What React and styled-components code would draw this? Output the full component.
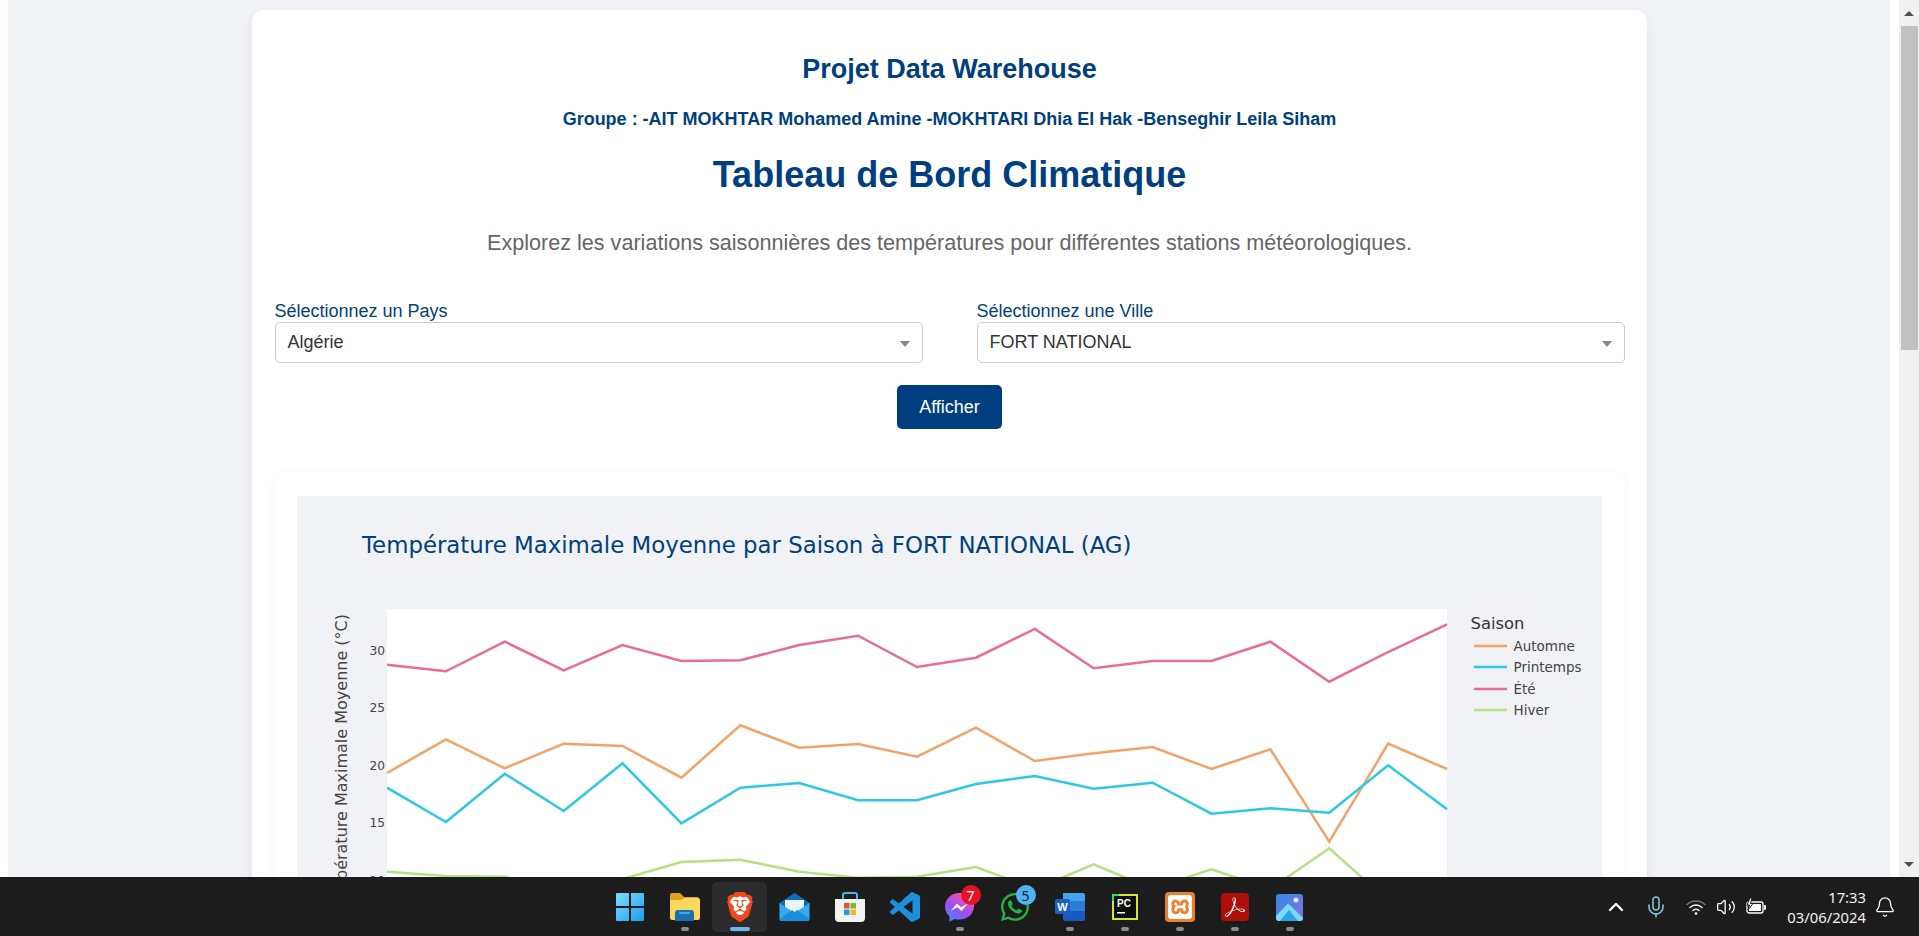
import styled, { createGlobalStyle } from 'styled-components';
import { ChevronUp, Mic, Volume2, Bell } from 'lucide-react';
import { SiBrave, SiXampp, SiAdobeacrobatreader } from 'react-icons/si';
import { FaWhatsapp } from 'react-icons/fa';

const NAVY = '#003f7f';

const GlobalStyle = createGlobalStyle`
  html, body { margin: 0; height: 100%; overflow: hidden; background: #fff; }
  * { box-sizing: border-box; }
  body { font-family: "Liberation Sans", Arial, sans-serif; }
`;

const Screen = styled.div`
  display: flex;
  flex-direction: column;
  height: 936px;
`;

const Viewport = styled.div`
  flex: 1;
  min-height: 0;
  display: flex;
  background: #fff;
`;

const Page = styled.main`
  flex: 1;
  min-width: 0;
  margin: 0 9px 0 8px;
  padding-top: 10px;
  background: #f0f2f5;
  overflow: hidden;
`;

const Card = styled.section`
  width: 1395px;
  margin: 0 auto;
  padding: 43px 22px 30px 23px;
  background: #fff;
  border-radius: 12px;
  box-shadow: 0 4px 12px rgba(0, 0, 0, 0.06);
  text-align: center;
`;

const ProjectTitle = styled.h2`
  margin: 0;
  font-size: 27px;
  line-height: 32px;
  font-weight: 700;
  color: ${NAVY};
`;

const Team = styled.h4`
  margin: 24px 0 0;
  font-size: 18px;
  line-height: 20px;
  font-weight: 700;
  color: ${NAVY};
`;

const MainTitle = styled.h1`
  margin: 24px 0 0;
  font-size: 36px;
  line-height: 44px;
  font-weight: 700;
  color: ${NAVY};
`;

const Intro = styled.p`
  margin: 33px 0 0;
  font-size: 21.6px;
  line-height: 26px;
  color: #666;
`;

const Filters = styled.div`
  display: grid;
  grid-template-columns: 648px 648px;
  justify-content: space-between;
  margin-top: 45px;
  text-align: left;
`;

const Field = styled.div`
  display: flex;
  flex-direction: column;
  gap: 1px;
`;

const Label = styled.label`
  font-size: 18px;
  line-height: 20px;
  color: ${NAVY};
`;

const Select = styled.div`
  display: flex;
  align-items: center;
  justify-content: space-between;
  height: 41px;
  padding: 0 12px;
  border: 1px solid #ccc;
  border-radius: 5px;
  font-size: 18px;
  color: #333;
`;

const Caret = styled.span`
  width: 0;
  height: 0;
  margin-top: 3px;
  border-left: 5px solid transparent;
  border-right: 5px solid transparent;
  border-top: 6px solid #888;
`;

const ShowButton = styled.button`
  display: block;
  width: 105px;
  height: 44px;
  margin: 22px auto 0;
  border: 0;
  border-radius: 5px;
  background: ${NAVY};
  color: #fff;
  font: 18px "Liberation Sans", Arial, sans-serif;
`;

const ChartCard = styled.div`
  margin-top: 43px;
  padding: 24px 23px 24px 22px;
  background: #fff;
  border-radius: 12px;
  box-shadow: 0 2px 10px rgba(0, 0, 0, 0.05);
`;

const PlotBox = styled.div`
  height: 620px;
  background: #f0f2f5;
`;

const PlotSvg = styled.svg`
  display: block;
  width: 100%;
  height: 100%;
  font-family: "DejaVu Sans", Verdana, sans-serif;
`;

const ScrollTrack = styled.div`
  width: 20px;
  display: flex;
  flex-direction: column;
  align-items: center;
  background: #f1f1f1;
`;

const ScrollArrow = styled.div`
  flex: 0 0 26px;
  width: 100%;
  display: flex;
  align-items: center;
  justify-content: center;
  &::before {
    content: '';
    border-left: 5px solid transparent;
    border-right: 5px solid transparent;
    ${p => (p.$down ? 'border-top: 5px solid #505050;' : 'border-bottom: 5px solid #505050;')}
  }
`;

const ScrollThumb = styled.div`
  width: 17px;
  height: 324px;
  background: #c1c1c1;
`;

const ScrollRest = styled.div`
  flex: 1;
`;

const Taskbar = styled.footer`
  flex: 0 0 59px;
  display: grid;
  grid-template-columns: 1fr auto 1fr;
  background: #1c1c1c;
`;

const Dock = styled.div`
  grid-column: 2;
  display: flex;
  align-items: center;
`;

const Tile = styled.div`
  position: relative;
  width: 55px;
  height: 50px;
  margin-top: 1px;
  display: flex;
  align-items: center;
  justify-content: center;
  border-radius: 5px;
  background: ${p => (p.$active ? '#2c2c2c' : 'transparent')};
`;

const Pill = styled.span`
  position: absolute;
  left: 50%;
  bottom: 1px;
  width: ${p => (p.$active ? 20 : 8)}px;
  height: 4px;
  border-radius: 2px;
  transform: translateX(-50%);
  background: ${p => (p.$active ? '#6cb8e8' : '#8b8b8b')};
`;

const Badge = styled.span`
  position: absolute;
  top: 3px;
  right: 6.5px;
  width: 20px;
  height: 20px;
  border-radius: 50%;
  display: flex;
  align-items: center;
  justify-content: center;
  font: 14px "Noto Sans", sans-serif;
  color: ${p => (p.$dark ? '#10222e' : '#fff')};
  background: ${p => p.$color};
`;

const BraveMark = styled(SiBrave)`
  color: #f1491d;
  background: radial-gradient(circle at 50% 42%, #fff 0 46%, transparent 48%);
`;

const SquareMark = styled.span`
  width: ${p => p.$size}px;
  height: ${p => p.$size}px;
  display: flex;
  align-items: center;
  justify-content: center;
  border-radius: 4px;
  color: #fff;
  background: ${p => p.$color};
`;

const Tray = styled.div`
  grid-column: 3;
  display: flex;
  align-items: center;
  justify-content: flex-end;
  padding-right: 23px;
  color: #fff;
`;

const TrayIcons = styled.div`
  display: flex;
  align-items: center;
  margin-right: 11px;
`;

const TraySlot = styled.span`
  width: ${p => p.$w}px;
  display: flex;
  justify-content: center;
  color: ${p => p.$color || '#fff'};
`;

const Clock = styled.div`
  font: 14.8px/20px "Noto Sans", sans-serif;
  text-align: right;
  margin-right: 8px;
  color: #f2f2f2;
`;

const WindowsIcon = () => (
  <svg width="30" height="30" viewBox="0 0 30 30">
    <defs>
      <linearGradient id="win" x1="0" y1="0" x2="1" y2="1">
        <stop offset="0" stopColor="#7fdcfb" />
        <stop offset="1" stopColor="#1b9df0" />
      </linearGradient>
    </defs>
    <path fill="url(#win)" d="M1 2a1 1 0 0 1 1-1h12v13H1zM16 1h12a1 1 0 0 1 1 1v12H16zM1 16h13v13H2a1 1 0 0 1-1-1zM16 16h13v12a1 1 0 0 1-1 1H16z" />
  </svg>
);

const FolderIcon = () => (
  <svg width="31" height="30" viewBox="0 0 31 30">
    <path fill="#e0a31f" d="M1 3a2 2 0 0 1 2-2h8l4 4h13a2 2 0 0 1 2 2v6H1z" />
    <path fill="#fbd75f" d="M1 8h12l3-2h13a2 2 0 0 1 2 2v18a2 2 0 0 1-2 2H3a2 2 0 0 1-2-2z" />
    <path fill="#1a6fb5" d="M6 21a3 3 0 0 1 3-3h13a3 3 0 0 1 3 3v8H6z" />
    <rect fill="#4aa8e0" x="10" y="20" width="11" height="2" rx="1" />
  </svg>
);

const MailIcon = () => (
  <svg width="31" height="30" viewBox="0 0 31 30">
    <path fill="#0f6cbd" d="M15.5 1 30.5 11v3h-30v-3z" />
    <path fill="#e9f6fd" d="M6 8h19v12H6z" />
    <path fill="#35aaf0" d="M.5 11 15.5 21 30.5 11v16a2 2 0 0 1-2 2h-26a2 2 0 0 1-2-2z" />
    <path fill="#1b8fdd" d="M.5 27 13 18l2.5 2 2.5-2 12.5 9a2 2 0 0 1-2 2h-26a2 2 0 0 1-2-2z" />
  </svg>
);

const StoreIcon = () => (
  <svg width="30" height="30" viewBox="0 0 30 30">
    <path fill="none" stroke="#49b4e8" strokeWidth="2" d="M8 8V3a2 2 0 0 1 2-2h10a2 2 0 0 1 2 2v5" />
    <path fill="#f3f3f3" d="M0 7h30v19a4 4 0 0 1-4 4H4a4 4 0 0 1-4-4z" />
    <rect fill="#e8542c" x="9" y="11" width="5.5" height="5.5" />
    <rect fill="#7fb62c" x="15.5" y="11" width="5.5" height="5.5" />
    <rect fill="#1e9ce8" x="9" y="17.5" width="5.5" height="5.5" />
    <rect fill="#f6b81a" x="15.5" y="17.5" width="5.5" height="5.5" />
  </svg>
);

const VsCodeIcon = () => (
  <svg width="30" height="30" viewBox="0 0 24 24">
    <path fill="#1d8fdc" d="M23.15 2.587L18.21.21a1.494 1.494 0 0 0-1.705.29l-9.46 8.63-4.12-3.128a.999.999 0 0 0-1.276.057L.327 7.261A1 1 0 0 0 .326 8.74L3.899 12 .326 15.26a1 1 0 0 0 .001 1.479L1.65 17.94a.999.999 0 0 0 1.276.057l4.12-3.128 9.46 8.63a1.492 1.492 0 0 0 1.704.29l4.942-2.377A1.5 1.5 0 0 0 24 20.06V3.939a1.5 1.5 0 0 0-.85-1.352zm-5.146 14.861L10.826 12l7.178-5.448v10.896z" />
  </svg>
);

const MessengerIcon = () => (
  <svg width="31" height="31" viewBox="0 0 31 31">
    <defs>
      <linearGradient id="msgr" x1="0.2" y1="1" x2="0.8" y2="0">
        <stop offset="0" stopColor="#3f8bff" />
        <stop offset="0.45" stopColor="#a04bf5" />
        <stop offset="1" stopColor="#ff5c87" />
      </linearGradient>
    </defs>
    <path fill="url(#msgr)" d="M15.5 1C7.2 1 1 7 1 14.6c0 4 1.7 7.4 4.5 9.8v5.3l5-2.8c1.6.5 3.2.7 5 .7 8.3 0 14.5-6 14.5-13.6S23.8 1 15.5 1z" />
    <path fill="#fff" d="M6.5 19 13 11.5l4 3.7 7-3.7-6.5 7.500-4-3.700z" />
  </svg>
);

const WordIcon = () => (
  <svg width="30" height="30" viewBox="0 0 30 30">
    <path fill="#41a5ee" d="M8 1h20a2 2 0 0 1 2 2v6H8z" />
    <path fill="#2b7cd3" d="M8 9h22v10H8z" />
    <path fill="#185abd" d="M8 19h22v8a2 2 0 0 1-2 2H10a2 2 0 0 1-2-2z" />
    <rect fill="#1a5fc2" x="0" y="7" width="15" height="15" rx="1.5" />
    <text x="7.5" y="19" textAnchor="middle" fontSize="11" fontWeight="700" fill="#fff" fontFamily="Liberation Sans">W</text>
  </svg>
);

const PyCharmIcon = () => (
  <svg width="26" height="26" viewBox="0 0 26 26">
    <rect x="1" y="1" width="24" height="24" fill="#0b0f0c" stroke="#d8e23a" strokeWidth="2" />
    <path stroke="#21d789" strokeWidth="2" d="M1 1h6M1 1v6" />
    <text x="5" y="13" fontSize="10" fontWeight="700" fill="#fff" fontFamily="Liberation Sans">PC</text>
    <rect x="5" y="18" width="8" height="1.5" fill="#fff" />
  </svg>
);

const PhotosIcon = () => (
  <svg width="27" height="27" viewBox="0 0 27 27">
    <defs>
      <linearGradient id="photo" x1="0" y1="0" x2="1" y2="1">
        <stop offset="0" stopColor="#2f8be6" />
        <stop offset="1" stopColor="#8a6fdc" />
      </linearGradient>
    </defs>
    <rect width="27" height="27" rx="3" fill="url(#photo)" />
    <circle cx="20" cy="6" r="2.5" fill="#e8e4fb" />
    <path fill="#7cd8f8" d="M0 22 12 9.5 18 15 27 24a3 3 0 0 1-3 3H3a3 3 0 0 1-3-3z" />
    <path fill="#2aa5ea" d="M4 27 13 16l9 11z" />
  </svg>
);

const WifiIcon = () => (
  <svg width="20" height="18" viewBox="0 0 20 18" fill="none" strokeWidth="1.5" strokeLinecap="round">
    <path stroke="#777" d="M1 6.500a13 13 0 0 1 18 0" />
    <path stroke="#fff" d="M4 9.500a8.600 8.600 0 0 1 12 0" />
    <path stroke="#fff" d="M7 12.500a4.400 4.400 0 0 1 6 0" />
    <circle cx="10" cy="15.500" r="1.300" fill="#fff" />
  </svg>
);

const BatteryIcon = () => (
  <svg width="22" height="18" viewBox="0 0 22 18" fill="none">
    <rect x="2" y="4" width="16" height="11" rx="2" stroke="#fff" strokeWidth="1.3" />
    <rect x="4" y="6" width="12" height="7" fill="#fff" />
    <rect x="19" y="7" width="2" height="5" rx="1" fill="#fff" />
    <path fill="#fff" stroke="#1c1c1c" d="M5 0 2 7h2.500L3 12l5-6.500H5.500L7 0z" />
  </svg>
);

const PLOT_X = i => 387 + 58.89 * i;

const SERIES = [
  { name: 'Automne', color: '#f5a266', y: [772, 738.3, 767.3, 742.7, 745, 776.7, 724.3, 746.7, 743, 755.7, 726.7, 760, 752.3, 746, 768, 748.3, 840.7, 742.7, 768] },
  { name: 'Printemps', color: '#2cc8e6', y: [786.7, 821, 772.7, 810, 762.3, 822.3, 786.7, 782, 799.3, 799.3, 783, 775, 787.7, 781.7, 812.7, 807.3, 811.7, 764.3, 808.3] },
  { name: 'Été', color: '#ec6a96', y: [663.7, 670.3, 640.7, 669.3, 644, 660, 659.3, 644, 634.7, 666, 656.7, 628, 667.3, 660, 660, 640.7, 680.7, 651, 623.3] },
  { name: 'Hiver', color: '#b4e282', y: [870.7, 875, 875.7, 890, 878, 861, 858.7, 870.7, 876.7, 875.7, 866, 888, 863.3, 888, 868.3, 888, 847.3, 900, 905] },
];

const TICKS = [[30, 650], [25, 707.5], [20, 765], [15, 822.5], [10, 880]];
const LEGEND_Y = [646, 667, 689, 710];

const Chart = () => (
  <PlotBox>
    {/* viewBox en coordonnées de la page pour caler les courbes sur la capture */}
    <PlotSvg viewBox="297 496 1305 620">
      <text x="362" y="553" fontSize="22.85" fill={NAVY}>
        Température Maximale Moyenne par Saison à FORT NATIONAL (AG)
      </text>
      <rect x="387" y="609" width="1060" height="500" fill="#fff" />
      <text transform="translate(347 614) rotate(-90)" textAnchor="end" fontSize="16" fill="#444">
        Température Maximale Moyenne (°C)
      </text>
      {TICKS.map(([label, y]) => (
        <text key={label} x="385" y={y + 4.5} textAnchor="end" fontSize="12.2" fill="#444">{label}</text>
      ))}
      <g transform="translate(0 1)">
        {SERIES.map(s => (
          <polyline
            key={s.name}
            fill="none"
            stroke={s.color}
            strokeWidth="2.5"
            points={s.y.map((y, i) => `${PLOT_X(i)},${y}`).join(' ')}
          />
        ))}
      </g>
      <text x="1470.5" y="629" fontSize="16.4" fill="#333">Saison</text>
      {SERIES.map((s, i) => (
        <g key={s.name}>
          <line x1="1474" x2="1507" y1={LEGEND_Y[i]} y2={LEGEND_Y[i]} stroke={s.color} strokeWidth="2.5" />
          <text x="1513.5" y={LEGEND_Y[i] + 4.5} fontSize="13.5" fill="#444">{s.name}</text>
        </g>
      ))}
    </PlotSvg>
  </PlotBox>
);

const App = () => (
  <Screen>
    <GlobalStyle />
    <Viewport>
      <Page>
        <Card>
          <ProjectTitle>Projet Data Warehouse</ProjectTitle>
          <Team>Groupe : -AIT MOKHTAR Mohamed Amine -MOKHTARI Dhia El Hak -Benseghir Leila Siham</Team>
          <MainTitle>Tableau de Bord Climatique</MainTitle>
          <Intro>Explorez les variations saisonnières des températures pour différentes stations météorologiques.</Intro>
          <Filters>
            <Field>
              <Label>Sélectionnez un Pays</Label>
              <Select>Algérie<Caret /></Select>
            </Field>
            <Field>
              <Label>Sélectionnez une Ville</Label>
              <Select>FORT NATIONAL<Caret /></Select>
            </Field>
          </Filters>
          <ShowButton>Afficher</ShowButton>
          <ChartCard>
            <Chart />
          </ChartCard>
        </Card>
      </Page>
      <ScrollTrack>
        <ScrollArrow />
        <ScrollThumb />
        <ScrollRest />
        <ScrollArrow $down />
      </ScrollTrack>
    </Viewport>
    <Taskbar>
      <Dock>
        <Tile><WindowsIcon /></Tile>
        <Tile><FolderIcon /><Pill /></Tile>
        <Tile $active><BraveMark size={30} /><Pill $active /></Tile>
        <Tile><MailIcon /></Tile>
        <Tile><StoreIcon /></Tile>
        <Tile><VsCodeIcon /></Tile>
        <Tile><MessengerIcon /><Badge $color="#e81123">7</Badge><Pill /></Tile>
        <Tile><FaWhatsapp size={32} color="#25b24a" /><Badge $color="#4cb4ee" $dark>5</Badge></Tile>
        <Tile><WordIcon /><Pill /></Tile>
        <Tile><PyCharmIcon /><Pill /></Tile>
        <Tile><SquareMark $size={30} $color="#ee7f2d"><SiXampp size={24} /></SquareMark><Pill /></Tile>
        <Tile><SquareMark $size={28} $color="#ae0f0a"><SiAdobeacrobatreader size={20} /></SquareMark><Pill /></Tile>
        <Tile><PhotosIcon /><Pill /></Tile>
      </Dock>
      <Tray>
        <TrayIcons>
          <TraySlot $w={40}><ChevronUp size={24} strokeWidth={2.4} /></TraySlot>
          <TraySlot $w={40} $color="#7cc3d8"><Mic size={24} strokeWidth={1.6} /></TraySlot>
          <TraySlot $w={40}><WifiIcon /></TraySlot>
          <TraySlot $w={20}><Volume2 size={22} strokeWidth={1.5} /></TraySlot>
          <TraySlot $w={40}><BatteryIcon /></TraySlot>
        </TrayIcons>
        <Clock>17:33<br />03/06/2024</Clock>
        <Bell size={22} strokeWidth={1.4} />
      </Tray>
    </Taskbar>
  </Screen>
);

export default App;
